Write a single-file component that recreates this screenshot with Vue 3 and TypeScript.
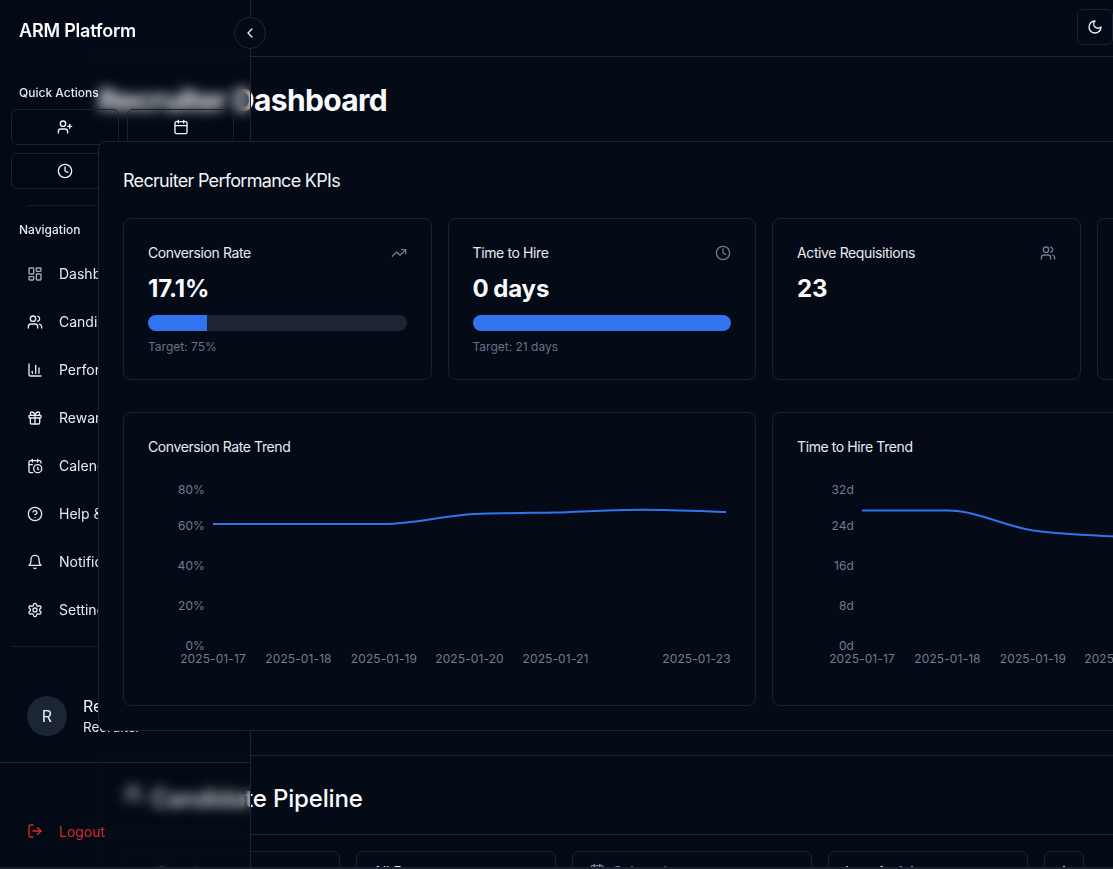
<script setup lang="ts">
import { h } from 'vue'

const circle = (cx: number, cy: number, r: number) =>
  `M${cx - r} ${cy}a${r} ${r} 0 1 0 ${2 * r} 0a${r} ${r} 0 1 0 ${-2 * r} 0`
const rect = (x: number, y: number, w: number, ht: number, r: number) =>
  `M${x + r} ${y}h${w - 2 * r}a${r} ${r} 0 0 1 ${r} ${r}v${ht - 2 * r}a${r} ${r} 0 0 1 ${-r} ${r}h${-(w - 2 * r)}a${r} ${r} 0 0 1 ${-r} ${-r}v${-(ht - 2 * r)}a${r} ${r} 0 0 1 ${r} ${-r}z`

const icons: Record<string, string[]> = {
  userPlus: ['M16 21v-2a4 4 0 0 0-4-4H6a4 4 0 0 0-4 4v2', circle(9, 7, 4), 'M19 8v6', 'M22 11h-6'],
  calendar: [rect(3, 4, 18, 18, 2), 'M16 2v4', 'M8 2v4', 'M3 10h18'],
  clock: [circle(12, 12, 10), 'M12 6v6l4 2'],
  dashboard: [rect(3, 3, 7, 9, 1), rect(14, 3, 7, 5, 1), rect(14, 12, 7, 9, 1), rect(3, 16, 7, 5, 1)],
  users: ['M16 21v-2a4 4 0 0 0-4-4H6a4 4 0 0 0-4 4v2', circle(9, 7, 4), 'M22 21v-2a4 4 0 0 0-3-3.87', 'M16 3.13a4 4 0 0 1 0 7.75'],
  chart: ['M3 3v16a2 2 0 0 0 2 2h16', 'M18 17V9', 'M13 17V5', 'M8 17v-3'],
  gift: [rect(3, 8, 18, 4, 1), 'M12 8v13', 'M19 12v7a2 2 0 0 1-2 2H7a2 2 0 0 1-2-2v-7', 'M7.5 8a2.5 2.5 0 0 1 0-5A4.8 8 0 0 1 12 8a4.8 8 0 0 1 4.5-5 2.5 2.5 0 0 1 0 5'],
  calendarClock: ['M21 7.5V6a2 2 0 0 0-2-2H5a2 2 0 0 0-2 2v14a2 2 0 0 0 2 2h3.5', 'M16 2v4', 'M8 2v4', 'M3 10h5', 'M17.5 17.5 16 16.3V14', circle(16, 16, 6)],
  help: [circle(12, 12, 10), 'M9.09 9a3 3 0 0 1 5.83 1c0 2-3 3-3 3', 'M12 17h.01'],
  bell: ['M6 8a6 6 0 0 1 12 0c0 7 3 9 3 9H3s3-2 3-9', 'M10.3 21a1.94 1.94 0 0 0 3.4 0'],
  settings: ['M12.22 2h-.44a2 2 0 0 0-2 2v.18a2 2 0 0 1-1 1.73l-.43.25a2 2 0 0 1-2 0l-.15-.08a2 2 0 0 0-2.73.73l-.22.38a2 2 0 0 0 .73 2.73l.15.1a2 2 0 0 1 1 1.72v.51a2 2 0 0 1-1 1.74l-.15.09a2 2 0 0 0-.73 2.73l.22.38a2 2 0 0 0 2.73.73l.15-.08a2 2 0 0 1 2 0l.43.25a2 2 0 0 1 1 1.73V20a2 2 0 0 0 2 2h.44a2 2 0 0 0 2-2v-.18a2 2 0 0 1 1-1.73l.43-.25a2 2 0 0 1 2 0l.15.08a2 2 0 0 0 2.73-.73l.22-.39a2 2 0 0 0-.73-2.73l-.15-.08a2 2 0 0 1-1-1.74v-.5a2 2 0 0 1 1-1.74l.15-.09a2 2 0 0 0 .73-2.73l-.22-.38a2 2 0 0 0-2.73-.73l-.15.08a2 2 0 0 1-2 0l-.43-.25a2 2 0 0 1-1-1.73V4a2 2 0 0 0-2-2z', circle(12, 12, 3)],
  logout: ['M9 21H5a2 2 0 0 1-2-2V5a2 2 0 0 1 2-2h4', 'M16 17l5-5-5-5', 'M21 12H9'],
  trending: ['M22 7l-8.5 8.5-5-5L2 17', 'M16 7h6v6'],
  moon: ['M12 3a6 6 0 0 0 9 9 9 9 0 1 1-9-9Z'],
  chevronLeft: ['m15 18-6-6 6-6'],
  plus: ['M5 12h14', 'M12 5v14']
}

const Icon = (props: { name: string; size?: number }) => {
  const s = props.size ?? 16
  return h(
    'svg',
    { width: s, height: s, viewBox: '0 0 24 24', fill: 'none', stroke: 'currentColor', 'stroke-width': 2, 'stroke-linecap': 'round', 'stroke-linejoin': 'round' },
    icons[props.name].map((d) => h('path', { d }))
  )
}
Icon.props = ['name', 'size']

const quick = ['userPlus', 'calendar', 'clock']
const nav = [
  { icon: 'dashboard', label: 'Dashboard' },
  { icon: 'users', label: 'Candidates' },
  { icon: 'chart', label: 'Performance' },
  { icon: 'gift', label: 'Rewards' },
  { icon: 'calendarClock', label: 'Calendar' },
  { icon: 'help', label: 'Help & Support' },
  { icon: 'bell', label: 'Notifications' },
  { icon: 'settings', label: 'Settings' }
]
const kpis = [
  { label: 'Conversion Rate', icon: 'trending', value: '17.1%', progress: 22.8, target: 'Target: 75%' },
  { label: 'Time to Hire', icon: 'clock', value: '0 days', progress: 100, target: 'Target: 21 days' },
  { label: 'Active Requisitions', icon: 'users', value: '23' },
  { label: 'Candidates Placed', icon: 'users', value: '12' }
]
const xTicks = [
  { x: 65, t: '2025-01-17' },
  { x: 150.5, t: '2025-01-18' },
  { x: 236, t: '2025-01-19' },
  { x: 321.5, t: '2025-01-20' },
  { x: 407.5, t: '2025-01-21' },
  { x: 548.5, t: '2025-01-23' }
]
const yPos = [21, 57, 97, 137, 177]
const charts = [
  {
    title: 'Conversion Rate Trend',
    y: ['80%', '60%', '40%', '20%', '0%'],
    d: 'M65 51L236 51C264 51 292 43.5 321.5 41.3C350 40 379 40 407 39.5C436 38.5 464 36.7 492.5 36.7C521 36.7 550 38 578 39'
  },
  {
    title: 'Time to Hire Trend',
    y: ['32d', '24d', '16d', '8d', '0d'],
    d: 'M65 37.5L150.5 37.5C179 37.5 207 53 236 57.5C264 61 293 62.5 321.5 63.5L578 64'
  }
]
</script>

<template>
  <div class="page">
    <main class="main">
      <header class="topbar">
        <button class="theme-btn"><Icon name="moon" /></button>
      </header>
      <div class="content">
        <h1 class="page-title">Recruiter Dashboard</h1>

        <section class="panel">
          <h2 class="panel-title">Recruiter Performance KPIs</h2>
          <div class="kpi-grid">
            <article v-for="k in kpis" :key="k.label" class="kpi">
              <div class="kpi-head">
                <span>{{ k.label }}</span>
                <Icon class="kpi-icon" :name="k.icon" />
              </div>
              <div class="kpi-value">{{ k.value }}</div>
              <template v-if="k.target">
                <div class="track"><div class="fill" :style="{ width: k.progress + '%' }"></div></div>
                <div class="target">{{ k.target }}</div>
              </template>
            </article>
          </div>
          <div class="chart-grid">
            <article v-for="c in charts" :key="c.title" class="chart-card">
              <h3 class="chart-title">{{ c.title }}</h3>
              <svg class="chart" width="583" height="208" viewBox="0 0 583 208">
                <text v-for="(t, i) in c.y" :key="t" x="57" :y="yPos[i]" text-anchor="end" class="tick">{{ t }}</text>
                <text v-for="t in xTicks" :key="t.t" :x="t.x" y="190" text-anchor="middle" class="tick">{{ t.t }}</text>
                <path :d="c.d" fill="none" stroke="#3273f0" stroke-width="2" />
              </svg>
            </article>
          </div>
        </section>

        <section class="pipeline">
          <div class="pipeline-head">
            <Icon class="pipeline-icon" name="users" :size="20" />
            <h2 class="pipeline-title">Candidate Pipeline</h2>
          </div>
          <div class="filters">
            <div class="field f-search"><span class="muted">Search</span></div>
            <div class="field f-dept"><span>All Departments</span></div>
            <div class="field f-date"><Icon class="muted" name="calendar" /><span class="muted">Select date</span></div>
            <div class="field f-last"><span>Last Activity</span></div>
            <div class="field f-btn"><Icon name="plus" /></div>
          </div>
        </section>
      </div>
    </main>

    <aside class="sidebar">
      <div class="brand">ARM Platform</div>
      <button class="collapse"><Icon name="chevronLeft" /></button>

      <div class="group-label quick-label">Quick Actions</div>
      <div class="quick-grid">
        <button v-for="q in quick" :key="q" class="quick-btn"><Icon :name="q" /></button>
      </div>
      <div class="sep-short"></div>

      <div class="group-label nav-label">Navigation</div>
      <nav class="nav">
        <a v-for="(n, i) in nav" :key="n.label" class="nav-item">
          <Icon :class="{ dim: i === 0 }" :name="n.icon" />
          <span class="nav-text">{{ n.label }}</span>
        </a>
      </nav>
      <div class="sep-long"></div>

      <div class="user">
        <div class="avatar">R</div>
        <div>
          <div class="user-name">Recruiter User</div>
          <div class="user-role">Recruiter</div>
        </div>
      </div>

      <div class="logout-wrap">
        <a class="nav-item logout"><Icon name="logout" /><span>Logout</span></a>
      </div>
    </aside>

    <div class="bottom-strip"></div>
  </div>
</template>

<style>
html, body { margin: 0; background: #040a16; overflow: hidden; }
</style>

<style scoped>
.page {
  position: relative;
  width: 1113px;
  height: 869px;
  overflow: hidden;
  background: #040a16;
  color: #f8fafc;
  font-family: Inter, "Liberation Sans", sans-serif;
}
button { font: inherit; color: inherit; background: none; padding: 0; cursor: pointer; }
h1, h2, h3 { margin: 0; }

.main { margin-left: 82px; width: 1031px; }
.topbar {
  height: 57px;
  padding-top: 9px;
  box-sizing: border-box;
  border-bottom: 1px solid #1e2635;
  display: flex;
  justify-content: flex-end;
  align-items: flex-start;
}
.theme-btn {
  width: 36px;
  height: 36px;
  border: 1px solid #1a2231;
  border-radius: 6px;
  display: flex;
  align-items: center;
  justify-content: center;
  background: #040a16;
  color: #f1f5f9;
}
.content { width: 1332px; padding-left: 16px; }
.page-title {
  font-size: 30px;
  line-height: 36px;
  font-weight: 700;
  letter-spacing: -0.67px;
  padding-top: 25px;
  margin-bottom: 23px;
  color: #f8fafc;
}

.panel {
  position: relative;
  z-index: 20;
  width: 1332px;
  box-sizing: border-box;
  padding: 24px;
  border: 1px solid #1a2231;
  border-radius: 8px 0 0 8px;
  background: #040a16;
}
.panel-title {
  font-size: 18px;
  line-height: 28px;
  font-weight: 400;
  letter-spacing: -0.7px;
  color: #f1f5f9;
  padding-top: 1px;
  margin-bottom: 23px;
}
.kpi-grid { display: grid; grid-template-columns: repeat(4, 1fr); gap: 16px; margin-bottom: 32px; }
.kpi {
  height: 162px;
  box-sizing: border-box;
  padding: 24px;
  border: 1px solid #1a2231;
  border-radius: 8px;
}
.kpi-head {
  display: flex;
  justify-content: space-between;
  align-items: center;
  font-size: 14px;
  line-height: 20px;
  font-weight: 400;
  letter-spacing: -0.38px;
  color: #e8ecf2;
}
.kpi-icon { color: #6f7b8e; }
.kpi-value {
  font-size: 24px;
  line-height: 32px;
  font-weight: 700;
  margin-top: 9px;
  padding-top: 1px;
  color: #f8fafc;
  word-spacing: -1px;
  letter-spacing: -0.1px;
}
.track { height: 16px; margin-top: 10px; border-radius: 8px; background: #1b2535; overflow: hidden; }
.fill { height: 100%; background: #3273f0; }
.target { font-size: 12px; line-height: 16px; margin-top: 8px; color: #677387; }

.chart-grid { display: grid; grid-template-columns: repeat(2, 1fr); gap: 16px; }
.chart-card {
  height: 294px;
  box-sizing: border-box;
  padding: 24px;
  border: 1px solid #1a2231;
  border-radius: 8px;
}
.chart-title { font-size: 14px; line-height: 20px; font-weight: 400; letter-spacing: -0.4px; color: #e8ecf2; }
.chart { display: block; margin-top: 16px; overflow: visible; }
.tick { font-size: 12px; letter-spacing: 0.1px; fill: #727d8e; }

.pipeline {
  margin-top: 24px;
  border-top: 1px solid #1e2635;
  border-left: 1px solid #1a2231;
}
.pipeline-head {
  height: 79px;
  box-sizing: border-box;
  padding: 27px 24px 0 24px;
  border-bottom: 1px solid #1e2635;
  display: flex;
  align-items: flex-start;
  gap: 8px;
}
.pipeline-icon { color: #f1f5f9; margin-top: 1px; }
.pipeline-title { font-size: 24px; line-height: 32px; font-weight: 500; letter-spacing: -0.15px; color: #f8fafc; }
.filters { display: flex; gap: 16px; padding: 16px 0 0 24px; }
.field {
  height: 40px;
  box-sizing: border-box;
  padding: 0 16px;
  border: 1px solid #1a2231;
  border-radius: 6px;
  display: flex;
  align-items: center;
  gap: 8px;
  font-size: 14px;
  color: #e8ecf2;
}
.muted { color: #7a8698; }
.f-search { width: 217px; padding-left: 33px; }
.f-dept { width: 200px; }
.f-date { width: 240px; }
.f-last { width: 200px; }
.f-btn { width: 40px; justify-content: center; padding: 0; }

.sidebar {
  position: absolute;
  top: 0;
  left: 0;
  z-index: 10;
  width: 251px;
  height: 869px;
  box-sizing: border-box;
  border-right: 1px solid #1e2635;
  background: rgba(4, 10, 22, 0.05);
  backdrop-filter: blur(6px);
  display: flex;
  flex-direction: column;
}
.brand { padding: 17px 0 0 19px; font-size: 18px; line-height: 28px; font-weight: 600; letter-spacing: -0.2px; color: #f8fafc; }
.collapse {
  position: absolute;
  top: 17px;
  left: 234px;
  width: 32px;
  height: 32px;
  border: 1px solid #1e2635;
  border-radius: 50%;
  background: #040a16;
  display: flex;
  align-items: center;
  justify-content: center;
  color: #e8ecf2;
}
.group-label { padding-left: 19px; font-size: 12px; line-height: 16px; font-weight: 500; color: #e2e8f0; }
.quick-label { margin-top: 40px; }
.quick-grid {
  display: grid;
  grid-template-columns: 108px 107px;
  gap: 8px;
  margin: 8px 0 0 11px;
}
.quick-btn {
  height: 36px;
  border: 1px solid #1a2231;
  border-radius: 6px;
  display: flex;
  align-items: center;
  justify-content: center;
  color: #f1f5f9;
}
.sep-short { height: 1px; margin: 16px 27px 0; background: #141c2a; }
.nav-label { margin-top: 16px; }
.nav { margin-top: 12px; display: flex; flex-direction: column; }
.nav-item {
  height: 48px;
  display: flex;
  align-items: center;
  gap: 16px;
  padding-left: 27px;
  font-size: 14px;
  color: #e8ecf2;
}
.nav-text { margin-top: -1px; }
.dim { color: #a3adbb; }
.sep-long { height: 1px; margin: 12px 0 0 11px; background: #141c2a; }
.user { display: flex; align-items: center; gap: 16px; height: 40px; margin-top: 49px; padding-left: 27px; }
.avatar {
  width: 40px;
  height: 40px;
  border-radius: 50%;
  background: #1b2535;
  display: flex;
  align-items: center;
  justify-content: center;
  font-size: 16px;
  color: #e8ecf2;
}
.user-name { font-size: 16px; line-height: 20px; font-weight: 400; margin-bottom: 3px; color: #f8fafc; }
.user-role { font-size: 13.5px; line-height: 17px; color: #e2e8f0; }
.logout-wrap { margin-top: 26px; border-top: 1px solid #1e2635; padding-top: 44px; }
.logout { color: #dc2a2a; }

.bottom-strip { position: absolute; left: 0; right: 0; bottom: 0; height: 2px; background: #1a2230; z-index: 30; }
</style>
